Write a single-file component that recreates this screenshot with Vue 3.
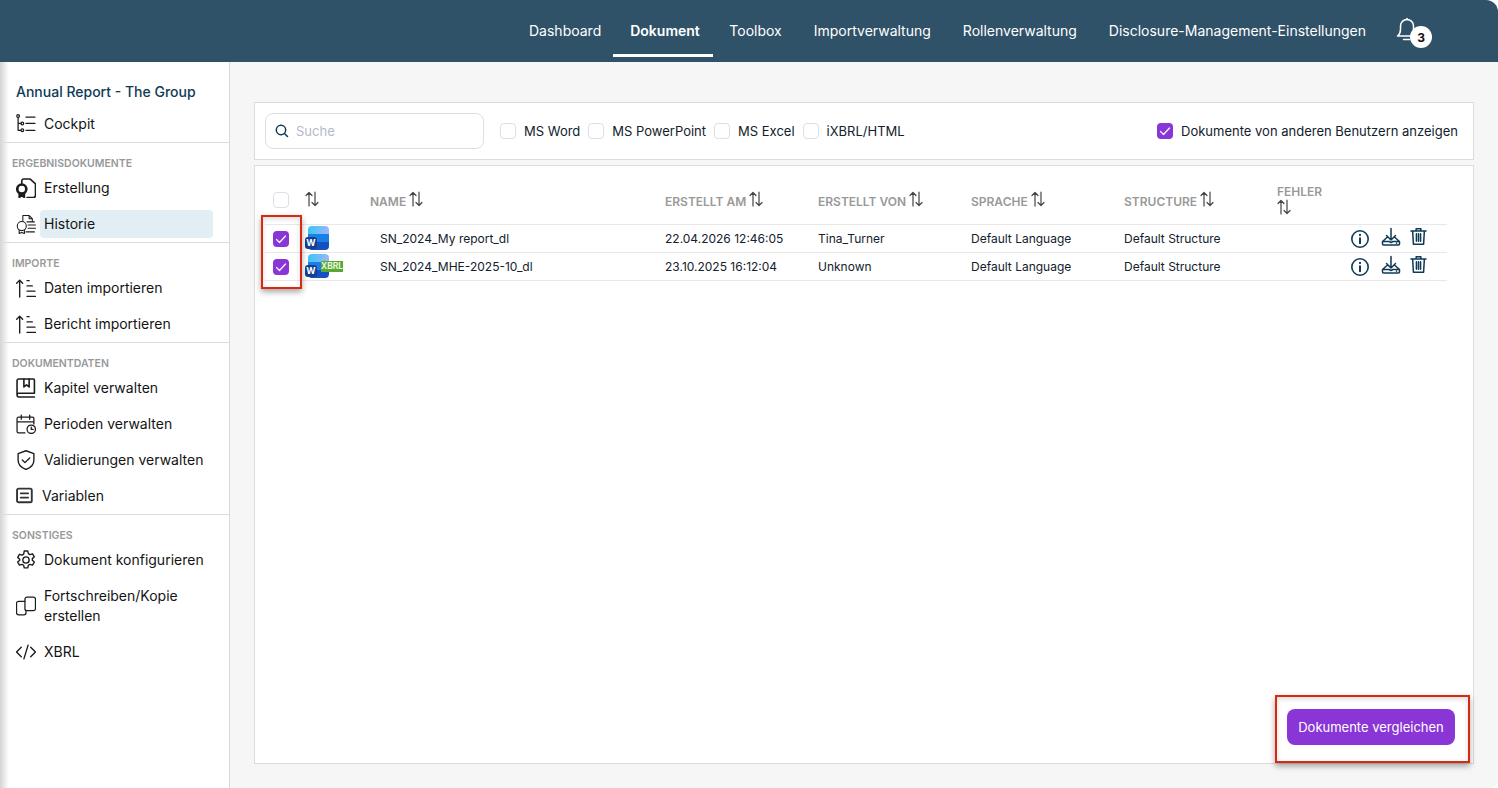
<template>
  <div class="page">
    <header class="topbar">
      <nav class="topnav">
        <a v-for="item in navItems" :key="item" class="nav-link" :class="{ active: item === 'Dokument' }">{{ item }}</a>
      </nav>
      <div class="bell">
        <svg width="24" height="24" viewBox="0 0 24 24" fill="none" stroke="#fff" stroke-width="1.500" stroke-linecap="round" stroke-linejoin="round">
          <path d="M1.500 19c2-1.600 3-3.400 3-6.500V9a6.500 6.500 0 0 1 13 0v3.500c0 3 1 4.900 3 6.500z" />
          <path d="M7.500 22.500h6" />
          <path d="M11 2.500v-1" />
        </svg>
        <span class="bell-count">3</span>
      </div>
    </header>

    <div class="body">
      <aside class="sidebar">
        <div class="doc-title">Annual Report - The Group</div>
        <template v-for="(section, i) in sections" :key="i">
          <div v-if="section.label" class="section-label">{{ section.label }}</div>
          <a
            v-for="item in section.items"
            :key="item.text"
            class="side-item"
            :class="{ tall: item.tall, selected: item.selected, narrow: item.icon === 'vars' }"
          >
            <svg class="side-icon" viewBox="0.5 0.5 19 19" fill="none" stroke="#1c1c1c" stroke-width="1.200" stroke-linecap="round" stroke-linejoin="round">
              <g v-if="item.icon === 'cockpit'">
                <circle cx="2.500" cy="2.500" r="1.300" /><circle cx="6.500" cy="9.500" r="1.300" /><circle cx="6.500" cy="16" r="1.300" />
                <path d="M2.500 4v12h2.700M2.500 9.500h2.700M10 3.500h8.500M10 9.500h8.500M10 16h8.500" />
              </g>
              <g v-else-if="item.icon === 'create'" stroke-width="1.500">
                <path d="M6 6V3.500a2 2 0 0 1 2-2h6l5 4.500v11a2 2 0 0 1-2 2h-6" />
                <circle cx="6" cy="11" r="4.300" stroke-width="2.500" />
                <path d="M3.500 14.500v4.500l2.500-1.500 2.500 1.500v-4.500" fill="#1c1c1c" />
              </g>
              <g v-else-if="item.icon === 'history'" stroke-width="1">
                <path d="M7 7V2h6l3 3v3M13 2v3h3M11 8h7M12 11h7M12 14h7M10 17.500h8" />
                <circle cx="6" cy="12" r="4.300" />
                <path d="M3.500 16v3l2.500-1 2.500 1v-3" />
              </g>
              <g v-else-if="item.icon === 'import'" stroke-width="1.300">
                <path d="M4 18.500V2.500M1.200 5.500 4 2.500l2.800 3M11 3h2M11 8h5M11 13h7.500M11 18h8" />
              </g>
              <g v-else-if="item.icon === 'book'" stroke-width="1.500">
                <path d="M1.500 16.500V3a1.500 1.500 0 0 1 1.500-1.500h14a1 1 0 0 1 1 1V15H3a1.700 1.700 0 0 0-1.500 1.700A1.700 1.700 0 0 0 3 18.500h15" />
                <path d="M8 1.500V9l2.500-2L13 9V1.500" />
              </g>
              <g v-else-if="item.icon === 'period'">
                <path d="M9 18.500H3a1.500 1.500 0 0 1-1.500-1.500V5A1.500 1.500 0 0 1 3 3.500h13A1.500 1.500 0 0 1 17.500 5v5M1.500 8h16M5.500 1.500v4M13.500 1.500v4" />
                <circle cx="15" cy="15" r="4" /><path d="M15 13v2.200h1.800" />
              </g>
              <g v-else-if="item.icon === 'shield'" stroke-width="1.300">
                <path d="M10 1.200 17.500 4v6c0 4.500-3.200 7.500-7.500 9-4.300-1.500-7.500-4.500-7.500-9V4z" />
                <path d="m6.500 10 2.500 2.500 4.500-4.500" />
              </g>
              <g v-else-if="item.icon === 'vars'" stroke-width="1.800" stroke="#333">
                <rect x="1.500" y="3" width="14" height="13" rx="1.500" />
                <path d="M5 7.500h7M5 11.500h7" />
              </g>
              <g v-else-if="item.icon === 'gear'" stroke-width="1.300">
                <path d="M8.300 1.500h3.400l.5 2.500 1.600.9 2.400-.8 1.700 2.900-1.900 1.700v1.600l1.900 1.700-1.700 2.900-2.400-.8-1.600.9-.5 2.500H8.300l-.5-2.500-1.600-.9-2.400.8-1.700-2.900 1.900-1.700V9.200L2.100 7.500l1.700-2.900 2.400.8 1.600-.9z" />
                <circle cx="10" cy="10" r="3" />
              </g>
              <g v-else-if="item.icon === 'copy'" stroke-width="1.200">
                <rect x="9" y="1.500" width="10" height="13" rx="2" />
                <path d="M9 5.500H3a2 2 0 0 0-2 2v9a2 2 0 0 0 2 2h5a2 2 0 0 0 2-2v-1.500" />
              </g>
              <g v-else-if="item.icon === 'code'" stroke-width="1.300">
                <path d="M5.500 5.500 1 10l4.500 4.500M14.500 5.500 19 10l-4.500 4.500M12 3.500 8 16.500" />
              </g>
            </svg>
            <span class="side-text">{{ item.text }}</span>
          </a>
          <hr v-if="i < sections.length - 1" class="side-rule" />
        </template>
      </aside>

      <main class="content">
        <section class="toolbar">
          <label class="search">
            <svg width="14" height="14" viewBox="0 0 14 14" fill="none" stroke="#0f3a55" stroke-width="1.500" stroke-linecap="round">
              <circle cx="6" cy="6" r="4.700" /><path d="m9.500 9.500 3 3" />
            </svg>
            <span class="placeholder">Suche</span>
          </label>
          <div class="filters">
            <label v-for="f in filters" :key="f" class="filter"><span class="box"></span>{{ f }}</label>
          </div>
          <label class="filter others">
            <span class="box checked">
              <svg width="16" height="16" viewBox="0 0 16 16" fill="none" stroke="#fff" stroke-width="1.200" stroke-linecap="round" stroke-linejoin="round"><path d="m3.500 8.500 3 3 6-6.500" /></svg>
            </span>
            Dokumente von anderen Benutzern anzeigen
          </label>
        </section>

        <section class="table-card">
          <div class="grid head">
            <span class="cell-check"><span class="box"></span></span>
            <span class="cell-type"><svg class="sort" viewBox="0 0 14 16" fill="none" stroke="#444" stroke-width="1.200" stroke-linecap="round" stroke-linejoin="round"><path d="M4 15V1.500M1 4.500l3-3 3 3M10 1v13.500M7 11.500l3 3 3-3" /></svg></span>
            <span v-for="c in columns" :key="c" class="col" :class="{ stack: c === 'FEHLER' }">
              {{ c }}
              <svg class="sort" viewBox="0 0 14 16" fill="none" stroke="#444" stroke-width="1.200" stroke-linecap="round" stroke-linejoin="round"><path d="M4 15V1.500M1 4.500l3-3 3 3M10 1v13.500M7 11.500l3 3 3-3" /></svg>
            </span>
            <span></span>
          </div>
          <div v-for="row in rows" :key="row.name" class="grid row">
            <span class="cell-check">
              <span class="box checked">
                <svg width="16" height="16" viewBox="0 0 16 16" fill="none" stroke="#fff" stroke-width="1.200" stroke-linecap="round" stroke-linejoin="round"><path d="m3.500 8.500 3 3 6-6.500" /></svg>
              </span>
            </span>
            <span class="cell-type">
              <span class="word-icon">
                <span class="word-body"></span>
                <span class="word-w">W</span>
                <span v-if="row.xbrl" class="xbrl-tag">XBRL</span>
              </span>
            </span>
            <span class="name">{{ row.name }}</span>
            <span>{{ row.date }}</span>
            <span>{{ row.author }}</span>
            <span>Default Language</span>
            <span>Default Structure</span>
            <span></span>
            <span class="actions">
              <svg width="20" height="20" viewBox="0 0 20 20" fill="none" stroke="#0f3a55" stroke-width="1.600" stroke-linecap="round"><circle cx="10" cy="10" r="8.200" /><path d="M10 9.200v5" stroke-width="2" /><path d="M10 5.900v.2" stroke-width="2.200" /></svg>
              <svg width="20" height="20" viewBox="0 2 20 20" fill="none" stroke="#0f3a55" stroke-width="1.500" stroke-linecap="round" stroke-linejoin="round"><path d="M10 1.500v11.500M5.500 8.500 10 13l4.500-4.500M6 10.500 1.500 14.500v2.500a1 1 0 0 0 1 1h15a1 1 0 0 0 1-1v-2.500L14 10.500M1.500 14.500H8l2 1 2-1h6.500M15.500 16.300h.1" /></svg>
              <svg class="trash" width="17" height="19" viewBox="0 2.500 18 20" fill="none" stroke="#0f3a55" stroke-width="1.600" stroke-linecap="round" stroke-linejoin="round"><path d="M1 4.500h16M6.500 4.500V2.200h5v2.300M2.800 4.500l.8 14h10.800l.8-14M6.800 7.500v8M9 7.500v8M11.200 7.500v8" /></svg>
            </span>
          </div>
          <button class="compare" type="button">Dokumente vergleichen</button>
        </section>
      </main>
    </div>

    <div class="mark mark-checks"></div>
    <div class="mark mark-button"></div>
  </div>
</template>

<script setup>
const navItems = ['Dashboard', 'Dokument', 'Toolbox', 'Importverwaltung', 'Rollenverwaltung', 'Disclosure-Management-Einstellungen']

const sections = [
  { items: [{ text: 'Cockpit', icon: 'cockpit' }] },
  {
    label: 'ERGEBNISDOKUMENTE',
    items: [
      { text: 'Erstellung', icon: 'create' },
      { text: 'Historie', icon: 'history', selected: true }
    ]
  },
  {
    label: 'IMPORTE',
    items: [
      { text: 'Daten importieren', icon: 'import' },
      { text: 'Bericht importieren', icon: 'import' }
    ]
  },
  {
    label: 'DOKUMENTDATEN',
    items: [
      { text: 'Kapitel verwalten', icon: 'book' },
      { text: 'Perioden verwalten', icon: 'period' },
      { text: 'Validierungen verwalten', icon: 'shield' },
      { text: 'Variablen', icon: 'vars' }
    ]
  },
  {
    label: 'SONSTIGES',
    items: [
      { text: 'Dokument konfigurieren', icon: 'gear' },
      { text: 'Fortschreiben/Kopie erstellen', icon: 'copy', tall: true },
      { text: 'XBRL', icon: 'code' }
    ]
  }
]

const filters = ['MS Word', 'MS PowerPoint', 'MS Excel', 'iXBRL/HTML']
const columns = ['NAME', 'ERSTELLT AM', 'ERSTELLT VON', 'SPRACHE', 'STRUCTURE', 'FEHLER']

const rows = [
  { name: 'SN_2024_My report_dl', date: '22.04.2026 12:46:05', author: 'Tina_Turner', xbrl: false },
  { name: 'SN_2024_MHE-2025-10_dl', date: '23.10.2025 16:12:04', author: 'Unknown', xbrl: true }
]
</script>

<style>
html, body { margin: 0; background: #fff; }
</style>

<style scoped>
.page {
  position: relative;
  width: 1498px;
  height: 788px;
  overflow: hidden;
  font-family: Inter, "Liberation Sans", sans-serif;
  color: #12212c;
  background: #fff;
  border-radius: 0 0 8px 0;
}

/* header */
.topbar {
  height: 62px;
  background: #2f5268;
  border-top-right-radius: 12px;
  display: flex;
  align-items: stretch;
  box-sizing: border-box;
  padding-left: 513px;
}
.topnav { display: flex; align-items: flex-start; }
.nav-link {
  display: flex;
  align-items: center;
  box-sizing: border-box;
  padding: 6px 16px 0;
  color: #fff;
  font-size: 14px;
  height: 57px;
  border-bottom: 3px solid transparent;
  white-space: nowrap;
}
.nav-link.active { font-weight: 600; border-bottom-color: #fff; margin-left: -4px; padding: 6px 13.500px 0 17px; }
.bell { position: relative; margin-left: 14px; width: 24px; padding-top: 17px; }
.bell-count {
  position: absolute;
  left: 14px;
  top: 26px;
  width: 22px;
  height: 22px;
  border-radius: 50%;
  background: #fff;
  color: #111;
  font-size: 12px;
  font-weight: 700;
  display: flex;
  align-items: center;
  justify-content: center;
}

/* sidebar */
.body { display: flex; height: 726px; }
.sidebar {
  width: 230px;
  box-sizing: border-box;
  flex: none;
  background: #fff;
  border-right: 1px solid #d9d9d9;
  padding-top: 18px;
  background-image: linear-gradient(to right, #d4d4d4, #fff 9px);
}
.doc-title { height: 26px; padding-left: 16px; font-size: 14px; font-weight: 500; line-height: 24px; color: #0f3a55; }
.section-label {
  height: 27px;
  padding: 13px 0 0 12px;
  box-sizing: border-box;
  font-size: 10.500px;
  line-height: 16px;
  font-weight: 600;
  color: #999;
}
.side-rule { margin: 0; border: none; border-top: 1px solid #dcdcdc; height: 0; }
.side-item {
  display: flex;
  align-items: center;
  height: 36px;
  padding-left: 16px;
  font-size: 14px;
  line-height: 20px;
  color: #141414;
  position: relative;
}
.side-item.tall { height: 56px; }
.side-icon { width: 20px; height: 20px; flex: none; margin-right: 8px; }
.side-item.narrow .side-icon { margin-right: 6px; }
.side-text { width: 165px; }
.side-item.selected .side-text {
  background: #e1eef4;
  border-radius: 4px;
  width: 169px;
  margin-left: -4px;
  padding-left: 4px;
  line-height: 28px;
}

/* content */
.content { flex: 1; background: #f6f6f6; padding: 40px 24px 24px; box-sizing: border-box; display: flex; flex-direction: column; gap: 5px; }
.toolbar {
  height: 58px;
  flex: none;
  box-sizing: border-box;
  background: #fff;
  border: 1px solid #dcdcdc;
  display: flex;
  align-items: center;
  padding: 0 15px 0 10px;
  font-size: 13px;
}
.search {
  width: 219px;
  height: 36px;
  box-sizing: border-box;
  border: 1px solid #dcdfe6;
  border-radius: 8px;
  display: flex;
  align-items: center;
  gap: 7px;
  padding-left: 9px;
}
.placeholder { color: #b4b9c9; font-size: 13px; }
.filters { display: flex; margin-left: 16px; gap: 8px; }
.filter { display: flex; align-items: center; gap: 8px; color: #12212c; white-space: nowrap; }
.others { margin-left: auto; }
.box {
  display: inline-flex;
  width: 16px;
  height: 16px;
  box-sizing: border-box;
  border: 1px solid #dcdfe6;
  border-radius: 4px;
  background: #fff;
  flex: none;
}
.box.checked { background: #8a35d6; border: none; }

/* table */
.table-card {
  flex: 1;
  position: relative;
  box-sizing: border-box;
  background: #fff;
  border: 1px solid #dcdcdc;
  padding: 0 26px 0 10px;
  font-size: 12px;
}
.grid {
  display: grid;
  box-sizing: border-box;
  grid-template-columns: 40px 65px 295px 153px 153px 153px 153px 73px 1fr;
  align-items: center;
  border-bottom: 1px solid #e8e8e8;
}
.grid > * { box-sizing: border-box; }
.head { height: 59px; font-size: 12px; font-weight: 600; color: #999; }
.row { height: 28px; color: #12212c; }
.cell-check { padding-left: 8px; display: flex; align-items: center; }
.head .cell-check { padding-top: 10px; }
.col { display: flex; align-items: center; gap: 3px; padding-top: 12px; white-space: nowrap; }
.col.stack { flex-direction: column; align-items: flex-start; gap: 0; padding-top: 9px; line-height: 14px; }
.sort { width: 14px; height: 16px; flex: none; }
.head .cell-type { padding-top: 8px; display: flex; }
.head .col .sort { margin-top: -4px; }
.head .col.stack .sort { margin-top: 0; }
.name { padding-left: 10px; color: #12212c; }
.actions { display: flex; align-items: center; gap: 11px; }
.actions svg { overflow: visible; flex: none; }
.actions .trash { margin-left: -2px; }
.word-icon { position: relative; display: block; width: 24px; height: 24px; margin-top: -1px; }
.word-body {
  position: absolute;
  left: 3px;
  top: 0;
  width: 21px;
  height: 24px;
  border-radius: 4px;
  background:
    linear-gradient(to bottom, transparent 33%, #1b7fe6 33%, #1b7fe6 66%, #1450c0 66%),
    linear-gradient(100deg, #34c6f6, #b0b4fb);
}
.word-w {
  position: absolute;
  left: 0;
  top: 11px;
  width: 12px;
  height: 12px;
  border-radius: 3px;
  background: #163f92;
  color: #fff;
  font-size: 9px;
  font-weight: 700;
  line-height: 12px;
  text-align: center;
}
.xbrl-tag {
  position: absolute;
  left: 16px;
  top: 7px;
  width: 22px;
  height: 11px;
  background: #5aa834;
  color: #e8f5df;
  font-size: 8.500px;
  font-weight: 700;
  line-height: 11px;
  letter-spacing: -0.1px;
  white-space: nowrap;
}
.compare {
  position: absolute;
  right: 18px;
  bottom: 18px;
  width: 168px;
  height: 36px;
  border: none;
  border-radius: 8px;
  background: #8a35d6;
  color: #fff;
  font-family: inherit;
  font-size: 13px;
  font-weight: 400;
}

/* red annotation frames from the screenshot */
.mark {
  position: absolute;
  box-sizing: border-box;
  border: 2px solid #d92a10;
  box-shadow: 0 3px 6px rgba(0, 0, 0, 0.35), inset 0 2px 5px rgba(0, 0, 0, 0.15);
  pointer-events: none;
}
.mark-checks { left: 261px; top: 215px; width: 41px; height: 74px; }
.mark-button { left: 1275px; top: 695px; width: 195px; height: 68px; }
</style>
